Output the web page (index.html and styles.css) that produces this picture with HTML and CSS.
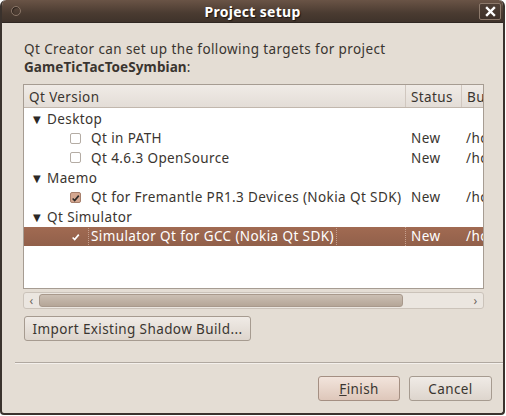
FILE: index.html
```html
<!DOCTYPE html>
<html>
<head>
<meta charset="utf-8">
<link rel="stylesheet" href="styles.css">
</head>
<body>
<div class="window">
  <div class="titlebar">
    <span class="menu-dot"></span>
    <span class="title">Project setup</span>
    <span class="close">
      <svg width="11" height="11" viewBox="0 0 11 11"><path d="M2 2 L9 9 M9 2 L2 9" stroke="#fff" stroke-width="2.4" stroke-linecap="square"/></svg>
    </span>
  </div>
  <div class="content">
    <p class="intro">Qt Creator can set up the following targets for project<br><b>GameTicTacToeSymbian</b>:</p>
    <div class="tree">
      <div class="header">
        <div class="hcol c1">Qt Version</div>
        <div class="hcol c2">Status</div>
        <div class="hcol c3">Bu</div>
      </div>
      <div class="body">
        <div class="row"><div class="c1"><span class="tri">▼</span>Desktop</div><div class="c2"></div><div class="c3"></div></div>
        <div class="row"><div class="c1 leaf"><span class="cb"></span>Qt in PATH</div><div class="c2">New</div><div class="c3">/ho</div></div>
        <div class="row"><div class="c1 leaf"><span class="cb"></span>Qt 4.6.3 OpenSource</div><div class="c2">New</div><div class="c3">/ho</div></div>
        <div class="row"><div class="c1"><span class="tri">▼</span>Maemo</div><div class="c2"></div><div class="c3"></div></div>
        <div class="row"><div class="c1 leaf"><span class="cb on"><svg width="11" height="11" viewBox="0 0 11 11"><path d="M2 5.5 L4.5 8 L9.5 2" fill="none" stroke="#2e2a28" stroke-width="2"/></svg></span>Qt for Fremantle PR1.3 Devices (Nokia Qt SDK)</div><div class="c2">New</div><div class="c3">/ho</div></div>
        <div class="row"><div class="c1"><span class="tri">▼</span>Qt Simulator</div><div class="c2"></div><div class="c3"></div></div>
        <div class="row sel"><div class="c1 leaf"><span class="cb sel-cb"><svg width="11" height="11" viewBox="0 0 11 11"><path d="M2 5.5 L4.5 8 L9.5 2" fill="none" stroke="#fff" stroke-width="2"/></svg></span><span class="focus">Simulator Qt for GCC (Nokia Qt SDK)</span></div><div class="c2 dotl">New</div><div class="c3">/ho</div></div>
      </div>
    </div>
    <div class="hscroll">
      <span class="arr">‹</span>
      <div class="track"><div class="thumb"></div></div>
      <span class="arr">›</span>
    </div>
    <div class="import-row">
      <button class="btn import">Import Existing Shadow Build...</button>
    </div>
    <div class="spacer"></div>
    <div class="sep"></div>
    <div class="buttons">
      <button class="btn finish"><u>F</u>inish</button>
      <button class="btn cancel">Cancel</button>
    </div>
  </div>
</div>
</body>
</html>
```
FILE: styles.css
```css
* { box-sizing: border-box; }
html, body { margin: 0; padding: 0; background: #fff; }
body { width: 506px; height: 416px; font-family: "Noto Sans", "DejaVu Sans", sans-serif; font-size: 13.5px; letter-spacing: 0.4px; color: #3a3530; }

.window {
  width: 505px; height: 415px;
  display: flex; flex-direction: column;
  border: 2px solid #3a322d; border-top: none;
  border-radius: 6px 6px 4px 4px;
  background: #e4ddd4;
  overflow: hidden;
}
.titlebar {
  height: 23px; flex: none;
  background: linear-gradient(#6a5446, #4a3b31 60%, #3f332b);
  border-bottom: 1px solid #2f2722;
  margin: 0 -2px;
  display: flex; align-items: center; justify-content: center;
  position: relative;
  border-radius: 6px 6px 0 0;
}
.menu-dot {
  position: absolute; left: 11px; top: 6px;
  width: 10px; height: 10px; border-radius: 50%;
  border: 1px solid #8a7668; box-shadow: inset 1px 1px 1px #2a201a;
}
.title { color: #fff; font-weight: bold; font-size: 14px; letter-spacing: 0.3px; text-shadow: 1px 1px 1px #1e1610; }
.close {
  position: absolute; right: 4px; top: 3px;
  width: 22px; height: 17px;
  border: 1px solid #8d7a6c; border-radius: 2px;
  background: linear-gradient(#4d3e34, #3e3129);
  display: flex; align-items: center; justify-content: center;
}

.content { flex: 1; display: flex; flex-direction: column; padding: 17px 11px 12px 21px; }
.intro { margin: 0 0 8px 1px; line-height: 18px; }
.intro b { font-weight: bold; letter-spacing: 0.1px; }

.tree { width: 461px; height: 205px; border: 1px solid #a69c92; background: #fff; overflow: hidden; display: flex; flex-direction: column; }
.header {
  height: 23px; flex: none; display: flex;
  background: linear-gradient(#f0ebe6, #e3ddd7);
  border-bottom: 1px solid #c1b7ad;
}
.hcol { display: flex; align-items: center; padding-top: 1px; }
.header .c2, .header .c3 { border-left: 1px solid #d0c7bf; }
.c1 { flex: none; width: 381px; padding-left: 5px; display: flex; align-items: center; white-space: nowrap; overflow: hidden; }
.c2 { flex: none; width: 56px; padding-left: 5px; display: flex; align-items: center; }
.c3 { flex: none; width: 40px; padding-left: 5px; display: flex; align-items: center; white-space: nowrap; overflow: hidden; }
.body { flex: 1; padding-top: 1px; }
.row { height: 19.6px; display: flex; }
.row .c2 { border-left: 1px solid transparent; }
.tri { font-size: 10px; width: 14px; margin-left: 4px; color: #2c2825; letter-spacing: 0; }
.leaf { padding-left: 46px; }
.cb { flex: none; width: 11px; height: 11px; border: 1px solid #b4aca4; border-radius: 2px; margin-right: 10px; background: #fff; display: inline-flex; }
.cb.on { background: #d4a790; border-color: #a8806c; }
.cb.sel-cb { background: transparent; border-color: transparent; }
.row.sel { background: linear-gradient(#a16a52, #91604a); color: #fff; }
.focus { outline: 1px dotted #c6a08e; outline-offset: 0; padding: 1px 2px; margin-left: -2px; }
.dotl { border-left: 1px dotted #c6a08e !important; }

.hscroll {
  width: 461px; height: 17px; margin-top: 3px;
  border: 1px solid #cbc3ba; border-radius: 3px;
  background: #ebe6e0;
  display: flex; align-items: center;
}
.arr { width: 15px; text-align: center; color: #6c645d; font-size: 12px; line-height: 14px; }
.track { flex: 1; height: 15px; padding: 1px 0; display: flex; }
.thumb { width: 364px; height: 13px; border-radius: 3px; border: 1px solid #a8998c; background: linear-gradient(#cbbfb3, #b5a698); }

.import-row { margin-top: 7px; display: flex; }
.btn {
  font-family: inherit; font-size: 13.5px; letter-spacing: 0.4px; color: #3a3530;
  border: 1px solid #a69b90; border-radius: 3px;
  background: linear-gradient(#f0ebe6, #ddd5cd);
  padding: 0; height: 25px;
}
.import { width: 227px; margin-left: 1px; }
.spacer { flex: 1; }
.sep { height: 2px; border-top: 1px solid #b0a8a0; border-bottom: 1px solid #f4f0ec; margin: 0 -11px 12px -8px; }
.buttons { display: flex; justify-content: flex-end; gap: 9px; }
.finish { width: 82px; background: linear-gradient(#f2e4dc, #dec7ba); border-color: #a48f82; }
.cancel { width: 83px; }
.btn u { text-decoration: underline; }
```
